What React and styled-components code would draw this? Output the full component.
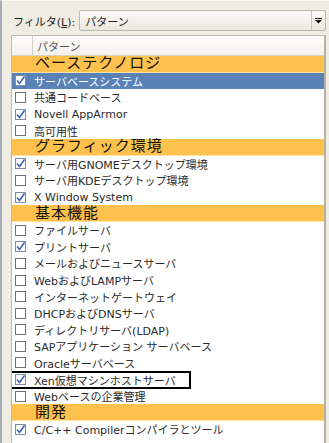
import React from 'react';
import styled, { createGlobalStyle } from 'styled-components';

const Global = createGlobalStyle`
  html, body { margin: 0; padding: 0; background: #efece4; }
  body { font-family: "DejaVu Sans", "Noto Sans CJK JP", sans-serif; }
`;

const Window = styled.div`
  width: 329px;
  height: 443px;
  box-sizing: border-box;
  background: #efece4;
  border-left: 2px solid #a3aaba;
  border-top: 1px solid #faf9f5;
  padding: 9px 3px 0 9px;
  display: flex;
  flex-direction: column;
  overflow: hidden;
`;

const FilterRow = styled.div`
  display: flex;
  align-items: center;
  height: 21px;
  gap: 4px;
`;

const Label = styled.span`
  font-size: 11px;
  color: #222;
  padding-left: 2px;
  white-space: nowrap;
  u { text-decoration: underline; }
`;

const Combo = styled.div`
  flex: 1;
  height: 21px;
  box-sizing: border-box;
  display: flex;
  border: 1px solid #bcb8ad;
  border-radius: 2px;
  background: linear-gradient(#fbfaf6, #ebe8de);
`;

const ComboText = styled.div`
  flex: 1;
  font-size: 11px;
  color: #222;
  display: flex;
  align-items: center;
  padding-left: 5px;
`;

const ComboButton = styled.div`
  width: 13px;
  border-left: 1px solid #c6c2b6;
  display: flex;
  align-items: center;
  justify-content: center;
`;

const ListPanel = styled.div`
  margin-top: 4px;
  flex: 1;
  border: 1px solid #bdb9ae;
  border-bottom: none;
  border-right: 2px solid #b5b1a6;
  background: #fff;
  overflow: hidden;
`;

const HeaderRow = styled.div`
  display: flex;
  height: 20px;
  background: linear-gradient(#fdfcf8, #f3f1ea);
  border-bottom: 1px solid #d6d2c6;
  box-sizing: border-box;
`;

const HeaderCell = styled.div`
  width: ${p => p.$w || 'auto'};
  flex: ${p => (p.$w ? 'none' : 1)};
  border-right: ${p => (p.$w ? '1px solid #d3cfc3' : 'none')};
  font-size: 11px;
  color: #555;
  display: flex;
  align-items: center;
  padding-left: ${p => (p.$w ? 0 : '4px')};
`;

const Category = styled.div`
  height: 16.6px;
  box-sizing: border-box;
  background: #ffc14d;
  border-bottom: 1px solid #ffe2a8;
  display: flex;
  align-items: center;
  font-size: 15px;
  line-height: 1;
  color: #111;
  padding-left: 23px;
  letter-spacing: 1px;
  white-space: nowrap;
`;

const Row = styled.div`
  position: relative;
  height: 16.6px;
  display: flex;
  align-items: center;
  gap: 8px;
  padding-left: 3px;
  background: ${p => (p.$selected ? '#5a82b6' : 'transparent')};
  color: ${p => (p.$selected ? '#fff' : '#2a2a2a')};
  font-size: 11px;
  white-space: nowrap;
`;

const Mark = styled.div`
  position: absolute;
  left: -3px;
  top: 0;
  width: 178px;
  height: 14px;
  border: 2px solid #000;
  pointer-events: none;
`;

const Box = styled.span`
  width: 11px;
  height: 11px;
  box-sizing: border-box;
  border: 1px solid ${p => (p.$checked ? '#7d8ca8' : '#6f6f6f')};
  background: #fff;
  flex: none;
  display: flex;
  align-items: center;
  justify-content: center;
`;

function Check({ checked }) {
  return (
    <Box $checked={checked}>
      {checked && (
        <svg width="9" height="9" viewBox="0 0 9 9">
          <path d="M1 4.5 L3.5 7.5 L8.5 0.5" fill="none" stroke="#3d66b8" strokeWidth="1.6" />
        </svg>
      )}
    </Box>
  );
}

const data = [
  { cat: 'ベーステクノロジ' },
  { t: 'サーバベースシステム', c: true, s: true },
  { t: '共通コードベース' },
  { t: 'Novell AppArmor', c: true },
  { t: '高可用性' },
  { cat: 'グラフィック環境' },
  { t: 'サーバ用GNOMEデスクトップ環境', c: true },
  { t: 'サーバ用KDEデスクトップ環境' },
  { t: 'X Window System', c: true },
  { cat: '基本機能' },
  { t: 'ファイルサーバ' },
  { t: 'プリントサーバ', c: true },
  { t: 'メールおよびニュースサーバ' },
  { t: 'WebおよびLAMPサーバ' },
  { t: 'インターネットゲートウェイ' },
  { t: 'DHCPおよびDNSサーバ' },
  { t: 'ディレクトリサーバ(LDAP)' },
  { t: 'SAPアプリケーション サーバベース' },
  { t: 'Oracleサーバベース' },
  { t: 'Xen仮想マシンホストサーバ', c: true, m: true },
  { t: 'Webベースの企業管理' },
  { cat: '開発' },
  { t: 'C/C++ Compilerコンパイラとツール', c: true },
];

export default function App() {
  return (
    <>
      <Global />
      <Window>
        <FilterRow>
          <Label>フィルタ(<u>L</u>):</Label>
          <Combo>
            <ComboText>パターン</ComboText>
            <ComboButton>
              <svg width="7" height="6" viewBox="0 0 7 6">
                <rect x="0" y="0" width="7" height="1" fill="#111" />
                <path d="M0 2 L7 2 L3.5 5.5 Z" fill="#111" />
              </svg>
            </ComboButton>
          </Combo>
        </FilterRow>
        <ListPanel>
          <HeaderRow>
            <HeaderCell $w="20px" />
            <HeaderCell>パターン</HeaderCell>
          </HeaderRow>
          {data.map((d, i) =>
            d.cat ? (
              <Category key={i}>{d.cat}</Category>
            ) : (
              <Row key={i} $selected={d.s}>
                <Check checked={!!d.c} />
                <span>{d.t}</span>
                {d.m && <Mark />}
              </Row>
            )
          )}
        </ListPanel>
      </Window>
    </>
  );
}
